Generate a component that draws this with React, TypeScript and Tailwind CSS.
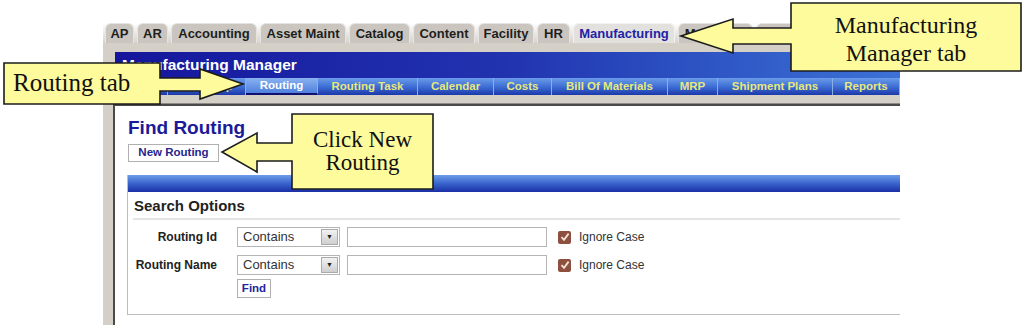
const TABS: [string, number][] = [
  ['AP', 29],
  ['AR', 31],
  ['Accounting', 86],
  ['Asset Maint', 86],
  ['Catalog', 61],
  ['Content', 62],
  ['Facility', 56],
  ['HR', 33],
  ['Manufacturing', 102],
  ['Marketing', 75],
  ['Order', 70],
];

const SUB_TABS: [string, number][] = [
  ['Main', 52],
  ['Job Shop', 78],
  ['Routing', 72],
  ['Routing Task', 100],
  ['Calendar', 76],
  ['Costs', 58],
  ['Bill Of Materials', 116],
  ['MRP', 50],
  ['Shipment Plans', 115],
  ['Reports', 67],
];

const SearchRow = ({ label }: { label: string }) => (
  <>
    <div className="text-right text-[12px] font-bold text-[#222] leading-[20px]">{label}</div>
    <div className="flex items-center">
      <div className="w-[103px] h-[20px] border border-[#b5b5b5] bg-white flex items-center justify-between">
        <span className="pl-[5px] text-[13px] text-[#333]">Contains</span>
        <span className="w-[17px] h-[16px] mr-[1px] bg-gradient-to-b from-[#f2f2f2] to-[#cfcfcf] border border-[#aaa] flex items-center justify-center text-[7px] text-[#222]">
          ▼
        </span>
      </div>
      <div className="ml-[7px] w-[200px] h-[20px] border border-[#b5b5b5] bg-white" />
      <div className="ml-[11px] w-[13px] h-[13px] rounded-[2px] bg-[#8d4f3e] flex items-center justify-center">
        <svg width="10" height="10" viewBox="0 0 10 10">
          <path d="M1.5 5.2 L4 7.8 L8.6 1.6" fill="none" stroke="#f4e3dc" strokeWidth="1.8" />
        </svg>
      </div>
      <span className="ml-[8px] text-[12px] text-[#333]">Ignore Case</span>
    </div>
  </>
);

const App = () => {
  return (
    <div className="relative w-[1024px] h-[327px] bg-white overflow-hidden font-['Liberation_Sans',Arial,sans-serif]">
      {/* screenshot */}
      <div className="ml-[103px] pt-[23px] w-[797px]">
        <div className="flex gap-[3px] pl-[2px] h-[20px] bg-gradient-to-b from-white to-[#d6d3cd]">
          {TABS.map(([t, w]) => (
            <div
              key={t}
              style={{ width: w }}
              className={
                'shrink-0 rounded-t-[6px] border border-b-0 flex items-center justify-center text-[13px] font-bold ' +
                (t === 'Manufacturing'
                  ? 'bg-[#e3e1dd] border-[#f3f2f0] text-[#2222a6]'
                  : 'bg-[#cac6bf] border-[#e6e4e0] text-[#1e1e1e]')
              }
            >
              {t}
            </div>
          ))}
        </div>
        <div className="bg-[#d4d0c8] h-[282px] flex flex-col">
          <div className="h-[9px]" />
          <div className="ml-[12px] bg-gradient-to-r from-[#15159c] via-[#2233b0] to-[#3d72d6]">
            <div className="h-[26px] pl-[7px] pt-[4px] text-[15.5px] font-bold text-white leading-[18px]">
              Manufacturing Manager
            </div>
            <div className="h-[17px] flex bg-gradient-to-b from-[#6b9be8] via-[#3f6fd6] to-[#1d38aa] pl-[1px]">
              {SUB_TABS.map(([t, w]) => (
                <div
                  key={t}
                  style={{ width: w }}
                  className={
                    'shrink-0 border-r border-[#8aaeea] flex items-center justify-center text-[11.5px] font-bold ' +
                    (t === 'Routing'
                      ? 'bg-gradient-to-b from-[#8ab2f0] to-[#4f80dc] text-white border-b-2 border-b-[#101070]'
                      : 'text-[#e8e87c]')
                  }
                >
                  {t}
                </div>
              ))}
            </div>
          </div>
          <div className="h-[9px] border-b border-[#8c8a86]" />
          <div className="flex-1 ml-[10px] bg-white border-t-2 border-l-2 border-[#4a4a4a]">
            <div className="pl-[13px] pt-[10px]">
              <div className="text-[19px] font-bold text-[#1a1a9a] leading-[23px]">Find Routing</div>
              <div className="mt-[5px] w-[91px] h-[18px] border border-[#b0b0b0] flex items-center justify-center text-[11.5px] font-bold text-[#26268c]">
                New Routing
              </div>
            </div>
            <div className="ml-[12px] mt-[13px] h-[140px] border-l border-b border-[#bdbdbd]">
              <div className="h-[17px] bg-gradient-to-b from-[#6d9de8] via-[#3a64cc] to-[#1c2ea6]" />
              <div className="pl-[6px] pt-[5px] text-[15px] font-bold text-[#222] leading-[18px]">Search Options</div>
              <div className="ml-[5px] mt-[3px] border-t-2 border-[#e4e4e4]" />
              <div className="mt-[7px] grid grid-cols-[89px_auto] gap-x-[20px] gap-y-[8px] items-center">
                <SearchRow label="Routing Id" />
                <SearchRow label="Routing Name" />
                <div />
                <div className="-mt-[4px] w-[34px] h-[19px] border border-[#b0b0b0] flex items-center justify-center text-[11.5px] font-bold text-[#2323a0]">
                  Find
                </div>
              </div>
            </div>
          </div>
        </div>
      </div>

      {/* callouts */}
      <svg className="absolute left-0 top-0 pointer-events-none" width="1024" height="327">
        <polygon
          points="791,3 1021,3 1021,71 791,71 791,44 733,44 733,53 681,36 733,19 733,28 791,28"
          fill="#fdfb9c"
          stroke="#1c1c1c"
          strokeWidth="1.6"
        />
        <polygon
          points="4,63 160,63 160,78 200,78 200,69 243,84 200,99 200,91 160,91 160,104 4,104"
          fill="#fdfb9c"
          stroke="#1c1c1c"
          strokeWidth="1.6"
        />
        <polygon
          points="292,114 433,114 433,189 292,189 292,161 257,161 257,172 222,152 257,133 257,143 292,143"
          fill="#fdfb9c"
          stroke="#1c1c1c"
          strokeWidth="1.6"
        />
      </svg>
      <div className="absolute left-[791px] top-[11px] w-[230px] text-center font-['Liberation_Serif',serif] text-[24px] leading-[28px] text-[#111]">
        Manufacturing
        <br />
        Manager tab
      </div>
      <div className="absolute left-[13px] top-[69px] font-['Liberation_Serif',serif] text-[25px] leading-[28px] text-[#111]">
        Routing tab
      </div>
      <div className="absolute left-[292px] top-[128px] w-[141px] text-center font-['Liberation_Serif',serif] text-[23px] leading-[23px] text-[#111]">
        Click New
        <br />
        Routing
      </div>
    </div>
  );
};

export default App;
